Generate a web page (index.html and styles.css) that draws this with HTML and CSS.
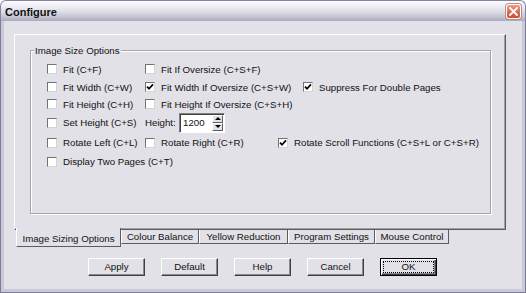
FILE: index.html
```html
<!DOCTYPE html>
<html>
<head>
<meta charset="utf-8">
<link rel="stylesheet" href="styles.css">
</head>
<body>
<div class="window">
  <div class="titlebar">
    <span class="title">Configure</span>
    <span class="close"><svg width="9" height="9" viewBox="0 0 9 9"><path d="M1 1L8 8M8 1L1 8" stroke="#fff" stroke-width="1.8" stroke-linecap="square"/></svg></span>
  </div>
  <div class="frame">
    <div class="client">
      <div class="panel">
        <div class="group">
          <div class="legend">Image Size Options</div>
          <div class="row r1">
            <label class="cb c1"><span class="box"></span>Fit (C+F)</label>
            <label class="cb"><span class="box"></span>Fit If Oversize (C+S+F)</label>
          </div>
          <div class="row r2">
            <label class="cb c1"><span class="box"></span>Fit Width (C+W)</label>
            <label class="cb c2a"><span class="box"><svg class="tick" width="8" height="8" viewBox="0 0 8 8"><path d="M1 3.6L3 5.8L7 1.4" fill="none" stroke="#000" stroke-width="1.7"/></svg></span>Fit Width If Oversize (C+S+W)</label>
            <label class="cb"><span class="box"><svg class="tick" width="8" height="8" viewBox="0 0 8 8"><path d="M1 3.6L3 5.8L7 1.4" fill="none" stroke="#000" stroke-width="1.7"/></svg></span>Suppress For Double Pages</label>
          </div>
          <div class="row r3">
            <label class="cb c1"><span class="box"></span>Fit Height (C+H)</label>
            <label class="cb"><span class="box"></span>Fit Height If Oversize (C+S+H)</label>
          </div>
          <div class="row r4">
            <label class="cb c1"><span class="box"></span>Set Height (C+S)</label>
            <span class="hlabel">Height:</span>
            <span class="spin"><span class="val">1200</span><span class="arrows"><span class="arr up"></span><span class="arr down"></span></span></span>
          </div>
          <div class="row r5">
            <label class="cb c1"><span class="box"></span>Rotate Left (C+L)</label>
            <label class="cb c2b"><span class="box"></span>Rotate Right (C+R)</label>
            <label class="cb"><span class="box"><svg class="tick" width="8" height="8" viewBox="0 0 8 8"><path d="M1 3.6L3 5.8L7 1.4" fill="none" stroke="#000" stroke-width="1.7"/></svg></span>Rotate Scroll Functions (C+S+L or C+S+R)</label>
          </div>
          <div class="row r6">
            <label class="cb"><span class="box"></span>Display Two Pages (C+T)</label>
          </div>
        </div>
      </div>
      <div class="tabs">
        <div class="tab sel t1">Image Sizing Options</div>
        <div class="tab t2">Colour Balance</div>
        <div class="tab t3">Yellow Reduction</div>
        <div class="tab t4">Program Settings</div>
        <div class="tab t5">Mouse Control</div>
      </div>
      <div class="buttons">
        <div class="btn">Apply</div>
        <div class="btn">Default</div>
        <div class="btn">Help</div>
        <div class="btn">Cancel</div>
        <div class="btn def"><div class="focus">OK</div></div>
      </div>
    </div>
  </div>
</div>
</body>
</html>
```

FILE: styles.css
```css
* { box-sizing: border-box; }
html, body { margin: 0; padding: 0; }
body {
  width: 526px;
  height: 293px;
  overflow: hidden;
  background: #fff;
  font-family: "Liberation Sans", Arial, sans-serif;
  font-size: 9.7px;
  color: #111;
}
.window {
  width: 526px;
  height: 293px;
  display: flex;
  flex-direction: column;
}
.titlebar {
  height: 21px;
  flex: none;
  display: flex;
  align-items: center;
  justify-content: space-between;
  padding: 0 4px 0 4px;
  border: 1px solid #8484a2;
  border-bottom: 0;
  border-radius: 6px 6px 0 0;
  background: linear-gradient(to bottom, #fbfbfd 0%, #ececf2 30%, #dcdce6 55%, #c4c4d4 80%, #a9a9c0 100%);
}
.title {
  font-size: 11px;
  font-weight: bold;
  color: #111;
  padding-top: 1px;
}
.close {
  width: 15px;
  height: 15px;
  border: 1px solid #fff;
  border-radius: 3px;
  background: linear-gradient(to bottom, #ef9a84 0%, #de6a50 55%, #cc5038 100%);
  display: flex;
  align-items: center;
  justify-content: center;
  box-shadow: 0 0 0 1px #b88a84;
}
.frame {
  flex: 1;
  display: flex;
  border: 1px solid #7c7c9a;
  border-top: 0;
  padding: 0 3px 3px 3px;
  background: #c9c9da;
}
.client {
  flex: 1;
  display: flex;
  flex-direction: column;
  background: #e2e1e7;
  padding: 13px 0 0 10px;
}
.panel {
  width: 492px;
  height: 196px;
  flex: none;
  border-top: 1px solid #fff;
  border-left: 1px solid #fff;
  border-right: 1px solid #5c5c5c;
  border-bottom: 1px solid #5c5c5c;
  box-shadow: inset -1px -1px 0 #a2a2a6;
  padding: 15px 0 0 15px;
}
.group {
  width: 461px;
  height: 164px;
  border: 1px solid #a6a6aa;
  box-shadow: inset 1px 1px 0 #fff, 1px 1px 0 #fff;
  padding: 0 0 0 16px;
  display: flex;
  flex-direction: column;
}
.legend {
  align-self: flex-start;
  margin: -6px 0 3px -13px;
  padding: 0 1px;
  height: 12px;
  line-height: 12px;
  background: #e2e1e7;
}
.row {
  display: flex;
  align-items: center;
  flex: none;
}
.r1 { height: 18px; }
.r2 { height: 18px; }
.r3 { height: 16px; }
.r4 { height: 21px; }
.r5 { height: 19px; }
.r6 { height: 19px; }
.cb {
  display: flex;
  align-items: center;
  gap: 6px;
  white-space: nowrap;
}
.c1 { width: 98px; }
.c2a { width: 158px; }
.c2b { width: 133px; }
.box {
  width: 10px;
  height: 10px;
  flex: none;
  background: #fff;
  border: 1px solid;
  border-color: #737373 #d4d4d4 #d4d4d4 #737373;
  display: flex;
  align-items: center;
  justify-content: center;
}
.hlabel { width: 34px; }
.spin {
  width: 46px;
  height: 20px;
  display: flex;
  background: #fff;
  border: 1px solid;
  border-color: #808080 #fff #fff #808080;
  box-shadow: inset 1px 1px 0 #404040;
}
.val {
  flex: 1;
  padding: 2px 0 0 3px;
  line-height: 14px;
}
.arrows {
  width: 11px;
  display: flex;
  flex-direction: column;
  margin: 1px 1px 1px 0;
}
.arr {
  flex: 1;
  background: #e2e1e7;
  border: 1px solid;
  border-color: #fff #606060 #606060 #fff;
  display: flex;
  align-items: center;
  justify-content: center;
}
.arr::before {
  content: "";
  width: 0;
  height: 0;
  border-left: 3px solid transparent;
  border-right: 3px solid transparent;
}
.up::before { border-bottom: 3px solid #000; }
.down::before { border-top: 3px solid #000; }
.tabs {
  display: flex;
  align-items: flex-start;
  margin: -1px 0 0 2px;
  flex: none;
}
.tab {
  height: 14px;
  margin-top: 1px;
  border-left: 1px solid #fff;
  border-right: 1px solid #5c5c5c;
  border-bottom: 1px solid #5c5c5c;
  text-align: center;
  line-height: 13px;
  white-space: nowrap;
}
.tab.sel {
  height: 19px;
  margin-top: -1px;
  background: #e2e1e7;
  padding-top: 4px;
  line-height: 13px;
}
.t1 { width: 105px; }
.t2 { width: 78px; }
.t3 { width: 89px; }
.t4 { width: 87px; }
.t5 { width: 74px; }
.buttons {
  display: flex;
  gap: 16px;
  margin: 11px 0 0 74px;
  flex: none;
}
.btn {
  width: 57px;
  height: 18px;
  border: 1px solid;
  border-color: #fff #404040 #404040 #fff;
  box-shadow: inset -1px -1px 0 #8a8a8e;
  text-align: center;
  line-height: 16px;
}
.btn.def {
  border-color: #000;
  box-shadow: inset 1px 1px 0 #fff, inset -1px -1px 0 #404040, inset -2px -2px 0 #8a8a8e;
  padding: 2px;
}
.focus {
  height: 12px;
  border: 1px dotted #000;
  line-height: 10px;
}
```
